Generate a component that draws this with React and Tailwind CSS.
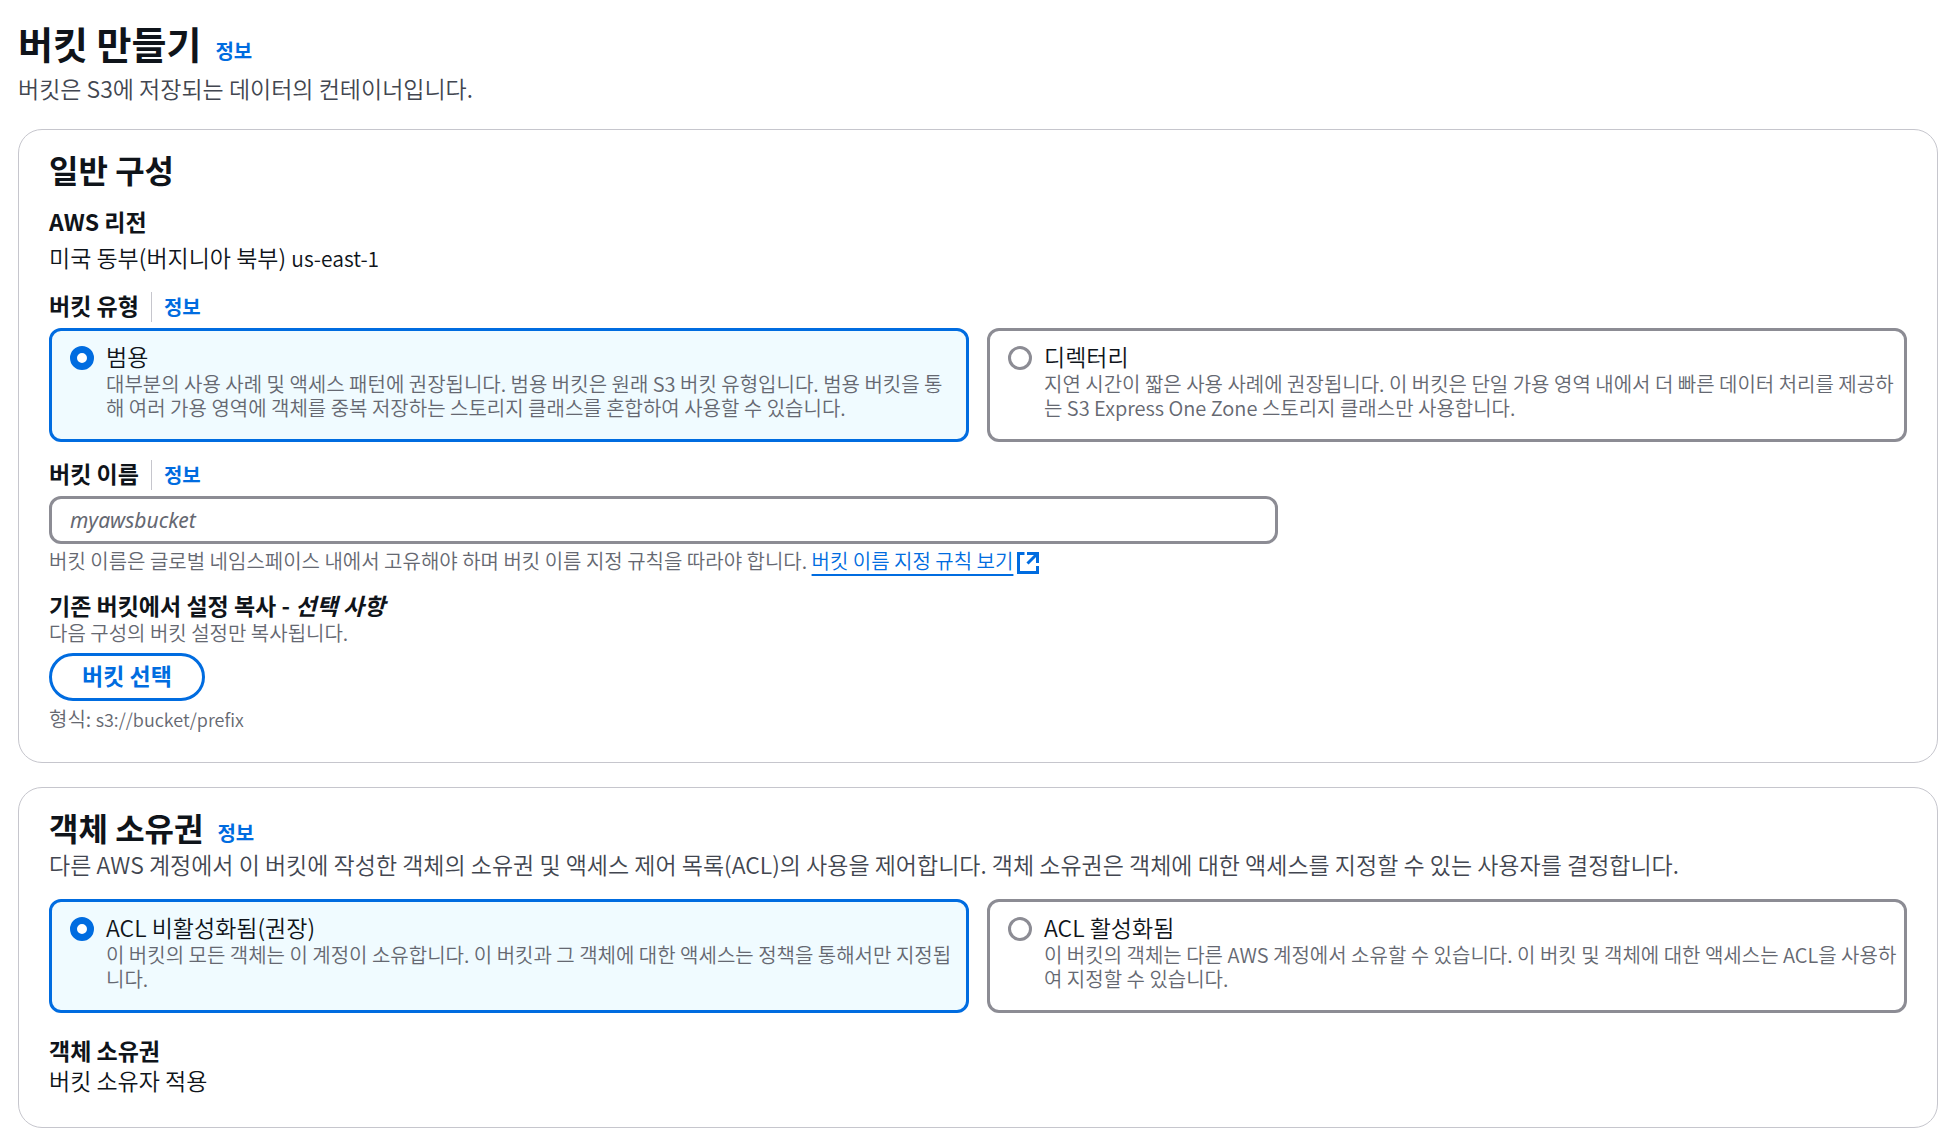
import { useState } from "react";

function InfoLink() {
  return (
    <a
      href="#info"
      className="
        font-['Noto_Sans_CJK_KR',sans-serif]
        text-[20px] leading-6 font-bold text-[#006ce0] hover:underline
      "
    >
      정보
    </a>
  );
}

function ExternalIcon() {
  return (
    <svg
      className="ml-1 inline-block size-[22px] align-[-5px]"
      viewBox="0 0 22 22"
      fill="none"
      stroke="currentColor"
      strokeWidth="3"
      aria-hidden="true"
    >
      <path d="M7.5 1.5h-6v19h19V14" />
      <path d="M10 1.5h10.500V11" />
      <path d="M20 2 10.500 11.500" />
    </svg>
  );
}

function FieldLabel({ id, htmlFor, children }) {
  return (
    <div className="mb-1.5 flex items-center gap-3">
      <label
        id={id}
        htmlFor={htmlFor}
        className="
          border-r border-[#c6c6cd] pr-3 pb-1
          font-['Noto_Sans_CJK_KR',sans-serif]
          leading-[26px] font-bold
        "
      >
        {children}
      </label>
      <InfoLink />
    </div>
  );
}

function Tiles({ name, labelledBy, items }) {
  const [value, setValue] = useState(items[0].value);

  return (
    <div
      role="radiogroup"
      aria-labelledby={labelledBy}
      className="grid grid-cols-1 gap-[18px] md:grid-cols-2"
    >
      {items.map((item) => (
        <label
          key={item.value}
          className="
            flex gap-3 rounded-xl border-3 border-[#8c8c94]
            pt-3 pr-1.5 pb-[19px] pl-[18px]
            has-checked:border-[#006ce0] has-checked:bg-[#f0fbff]
          "
        >
          <input
            type="radio"
            name={name}
            value={item.value}
            checked={value === item.value}
            onChange={() => setValue(item.value)}
            className="
              mt-[3px] size-6 shrink-0 appearance-none rounded-full
              border-3 border-[#8c8c94] bg-white
              checked:border-7 checked:border-[#006ce0]
            "
          />
          <span>
            <span className="mb-0.5 block leading-[27px]">{item.title}</span>
            <span className="block text-[20px] leading-6 text-[#656871]">
              {item.description}
            </span>
          </span>
        </label>
      ))}
    </div>
  );
}

const bucketTypes = [
  {
    value: "general",
    title: "범용",
    description:
      "대부분의 사용 사례 및 액세스 패턴에 권장됩니다. 범용 버킷은 원래 S3 버킷 유형입니다. 범용 버킷을 통해 여러 가용 영역에 객체를 중복 저장하는 스토리지 클래스를 혼합하여 사용할 수 있습니다.",
  },
  {
    value: "directory",
    title: "디렉터리",
    description:
      "지연 시간이 짧은 사용 사례에 권장됩니다. 이 버킷은 단일 가용 영역 내에서 더 빠른 데이터 처리를 제공하는 S3 Express One Zone 스토리지 클래스만 사용합니다.",
  },
];

const aclOptions = [
  {
    value: "disabled",
    title: "ACL 비활성화됨(권장)",
    description:
      "이 버킷의 모든 객체는 이 계정이 소유합니다. 이 버킷과 그 객체에 대한 액세스는 정책을 통해서만 지정됩니다.",
  },
  {
    value: "enabled",
    title: "ACL 활성화됨",
    description:
      "이 버킷의 객체는 다른 AWS 계정에서 소유할 수 있습니다. 이 버킷 및 객체에 대한 액세스는 ACL을 사용하여 지정할 수 있습니다.",
  },
];

function App() {
  const [bucketName, setBucketName] = useState("");

  return (
    <main
      className="
        bg-white pt-5 pr-4 pb-2 pl-[18px]
        font-['Noto_Sans_CJK_KR_DemiLight','Noto_Sans_CJK_KR',sans-serif]
        text-[23px] font-normal text-[#0f141a]
        [&_h1]:font-['Noto_Sans_CJK_KR',sans-serif]
        [&_h2]:font-['Noto_Sans_CJK_KR',sans-serif]
        [&_h3]:font-['Noto_Sans_CJK_KR',sans-serif]
      "
    >
      {/* PAGE HEADER */}
      <header className="mb-[26px]">
        <div className="flex items-baseline gap-3.5">
          <h1 className="text-[38px] leading-[45px] font-bold">버킷 만들기</h1>
          <InfoLink />
        </div>
        <p className="mt-2 leading-[30px] text-[#424650]">
          버킷은 S3에 저장되는 데이터의 컨테이너입니다.
        </p>
      </header>

      {/* GENERAL CONFIGURATION */}
      <section className="mb-6 rounded-3xl border border-[#c6c6cd] px-[30px] pt-[21px] pb-[31px]">
        <h2 className="text-[32px] leading-9 font-bold">일반 구성</h2>

        <h3 className="mt-[19px] leading-[30px] font-bold">AWS 리전</h3>
        <p className="mt-1.5 mb-5 leading-[30px]">
          미국 동부(버지니아 북부){" "}
          <span className="text-[21px] leading-none">us-east-1</span>
        </p>

        <FieldLabel id="bucket-type-label">버킷 유형</FieldLabel>
        <Tiles
          name="bucket-type"
          labelledBy="bucket-type-label"
          items={bucketTypes}
        />

        <div className="mt-[18px]">
          <FieldLabel htmlFor="bucket-name">버킷 이름</FieldLabel>
          <div className="grid grid-cols-3 gap-[30px]">
            <input
              id="bucket-name"
              type="text"
              value={bucketName}
              onChange={(e) => setBucketName(e.target.value)}
              placeholder="myawsbucket"
              className="
                col-span-3 h-12 rounded-xl border-3 border-[#8c8c94]
                px-[18px] font-['Noto_Sans',sans-serif] text-[21px] md:col-span-2
                placeholder:text-[#656871] placeholder:italic
              "
            />
          </div>
          <p className="mt-[5px] text-[20px] leading-6 text-[#656871]">
            버킷 이름은 글로벌 네임스페이스 내에서 고유해야 하며 버킷 이름 지정
            규칙을 따라야 합니다.{" "}
            <a
              href="#rules"
              className="text-[#006ce0] underline decoration-2 underline-offset-[5px]"
            >
              버킷 이름 지정 규칙 보기
              <ExternalIcon />
            </a>
          </p>
        </div>

        <h3 className="mt-4 leading-[30px] font-bold">
          기존 버킷에서 설정 복사 - <em>선택 사항</em>
        </h3>
        <p className="mt-px text-[20px] leading-6 text-[#656871]">
          다음 구성의 버킷 설정만 복사됩니다.
        </p>
        <button
          type="button"
          className="
            mt-2 flex h-12 items-center rounded-full
            border-3 border-[#006ce0] px-[30px] pb-1
            font-['Noto_Sans_CJK_KR',sans-serif]
            font-bold text-[#006ce0] hover:bg-[#f0fbff]
          "
        >
          버킷 선택
        </button>
        <p className="mt-1.5 text-[20px] leading-6 text-[#656871]">
          형식:{" "}
          <span className="text-[18px] leading-none">s3://bucket/prefix</span>
        </p>
      </section>

      {/* OBJECT OWNERSHIP */}
      <section className="rounded-3xl border border-[#c6c6cd] px-[30px] pt-[21px] pb-8">
        <div className="flex items-baseline gap-3.5">
          <h2 id="ownership-title" className="text-[32px] leading-9 font-bold">
            객체 소유권
          </h2>
          <InfoLink />
        </div>
        <p className="mt-1 mb-5 leading-[30px] text-[#424650]">
          다른 AWS 계정에서 이 버킷에 작성한 객체의 소유권 및 액세스 제어
          목록(ACL)의 사용을 제어합니다. 객체 소유권은 객체에 대한 액세스를
          지정할 수 있는 사용자를 결정합니다.
        </p>

        <Tiles
          name="ownership"
          labelledBy="ownership-title"
          items={aclOptions}
        />

        <h3 className="mt-[22px] leading-[30px] font-bold">객체 소유권</h3>
        <p className="leading-[30px]">버킷 소유자 적용</p>
      </section>
    </main>
  );
}

export default App;
